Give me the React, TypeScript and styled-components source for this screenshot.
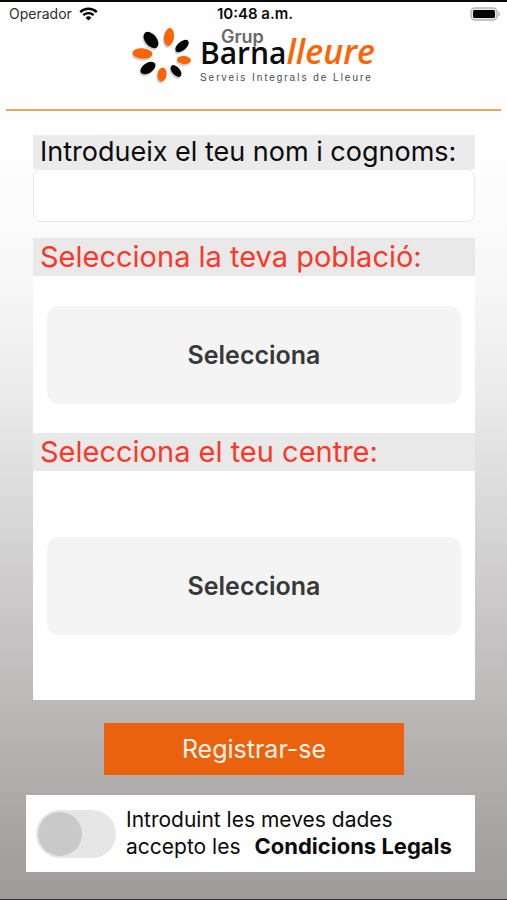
import React from "react";
import styled, { createGlobalStyle } from "styled-components";

const GlobalStyle = createGlobalStyle`
  *, *::before, *::after { box-sizing: border-box; }
  html { background: #9f9b9b; }
  body { margin: 0; font-family: Inter, "Liberation Sans", sans-serif; color: #0b0b0c; }
  button, input, select { font: inherit; color: inherit; }
`;

const Screen = styled.div`
  display: flex;
  flex-direction: column;
  min-height: 100vh;
  border-top: 2px solid #0c0a0b;
  border-bottom: 1px solid #2e2b2d;
  background: linear-gradient(
    180deg,
    #ffffff 0%,
    #fefefe 17%,
    #f8f8f8 30%,
    #ececec 43%,
    #dcdbdb 55%,
    #c9c7c7 68%,
    #b9b6b6 80%,
    #a9a5a5 92%,
    #9f9b9b 100%
  );
`;

const StatusBar = styled.div`
  display: grid;
  grid-template-columns: 1fr auto 1fr;
  align-items: center;
  height: 24px;
  padding: 0 6px 0 9px;
  font-size: 14px;
  line-height: 20px;
`;

const Carrier = styled.span`
  display: flex;
  align-items: center;
  gap: 7px;
  color: #2c2c2e;
`;

const Clock = styled.time`
  font-size: 15px;
  font-weight: 600;
`;

const BatterySlot = styled.span`
  display: flex;
  justify-content: flex-end;
`;

const Header = styled.header`
  display: flex;
  justify-content: center;
  margin: 0 6px;
  padding-bottom: 21px;
  border-bottom: 2px solid #eda266;
`;

const Brand = styled.div`
  display: flex;
  gap: 8px;
  height: 62px;
`;

const Wordmark = styled.div`
  display: flex;
  flex-direction: column;
`;

const BrandGroup = styled.span`
  padding-left: 21px;
  font-size: 18px;
  line-height: 22px;
  font-weight: 600;
  color: #69696b;
`;

const BrandName = styled.span`
  margin-top: -9px;
  font-family: "Open Sans", "Noto Sans", sans-serif;
  font-size: 30px;
  line-height: 24px;
  font-weight: 600;
  white-space: nowrap;
`;

const BrandAccent = styled.em`
  color: #fb6504;
  font-size: 34px;
`;

const Tagline = styled.span`
  margin-top: 7px;
  font-family: "Liberation Sans", Arial, sans-serif;
  font-size: 10px;
  line-height: 12px;
  letter-spacing: 2px;
  white-space: nowrap;
  color: #4a4a4c;
`;

const Form = styled.form`
  display: flex;
  flex: 1;
  flex-direction: column;
  padding: 24px 32px 27px 33px;
`;

const FieldLabel = styled.label<{ $required?: boolean }>`
  display: block;
  padding: 0 7px;
  background: ${(p) => (p.$required ? "#e9e9e9" : "#ebebeb")};
  color: ${(p) => (p.$required ? "#f9382a" : "#0b0b0c")};
  font-size: ${(p) => (p.$required ? 29 : 27)}px;
  line-height: ${(p) => (p.$required ? 38 : 34)}px;
`;

const NameInput = styled.input`
  width: 100%;
  height: 53px;
  margin-bottom: 16px;
  padding: 0 10px;
  border: 1px solid #e9e9e9;
  border-radius: 8px;
  background: #fff;
  font-size: 27px;
`;

const Panel = styled.div<{ $roomy?: boolean }>`
  padding: ${(p) => (p.$roomy ? "66px 14px 65px" : "30px 14px 29px")};
  background: #fff;
`;

const Picker = styled.select`
  display: block;
  width: 100%;
  height: 98px;
  border: 0;
  border-radius: 12px;
  appearance: none;
  background: #f4f4f4;
  color: #363839;
  font-size: 25px;
  font-weight: 600;
  text-align: center;
  text-align-last: center;
`;

const SubmitButton = styled.button`
  align-self: center;
  width: 68%;
  height: 52px;
  margin: 23px 0 20px;
  border: 0;
  background: #ea620e;
  color: #fff3e8;
  font-size: 25px;
`;

const Consent = styled.div`
  display: flex;
  align-items: center;
  gap: 10px;
  margin-left: -7px;
  padding: 12px 10px;
  background: #fff;
`;

const Switch = styled.input`
  display: flex;
  flex: none;
  align-items: center;
  width: 80px;
  height: 48px;
  margin: 0;
  padding: 2px;
  border-radius: 24px;
  appearance: none;
  background: #e6e6e7;

  &::before {
    content: "";
    width: 44px;
    height: 44px;
    border-radius: 50%;
    background: #c9c9c9;
  }

  &:checked {
    justify-content: flex-end;
    background: #f3b68d;
  }
`;

const ConsentText = styled.div`
  display: flex;
  flex-direction: column;
  font-size: 21px;
  line-height: 26px;
`;

const ConsentLine = styled.div`
  display: flex;
  align-items: baseline;
  gap: 14px;
  white-space: nowrap;
`;

const LegalLink = styled.a`
  color: inherit;
  font-size: 22px;
  font-weight: 700;
  text-decoration: none;
`;

const petals = [
  { x: 37, y: 11, rx: 5, ry: 9, turn: 8, fill: "#fb6504" },
  { x: 50, y: 20, rx: 4.4, ry: 8, turn: 50, fill: "#050505" },
  { x: 52, y: 34, rx: 4, ry: 7, turn: 96, fill: "#fb6504" },
  { x: 44, y: 45, rx: 4, ry: 7, turn: 140, fill: "#050505" },
  { x: 30, y: 48.5, rx: 4.6, ry: 7, turn: 8, fill: "#fb6504" },
  { x: 16, y: 42, rx: 5, ry: 8.4, turn: 57, fill: "#050505" },
  { x: 10.5, y: 27.5, rx: 5.2, ry: 10, turn: 94, fill: "#fb6504" },
  { x: 19, y: 14, rx: 5.8, ry: 9.4, turn: 140, fill: "#050505" },
];

const FlowerMark = () => (
  <svg width="60" height="60" viewBox="0 0 60 60" aria-hidden="true">
    {petals.map((p) => (
      <g key={`${p.x}-${p.y}`}>
        <ellipse
          rx={p.rx}
          ry={p.ry}
          fill="#000"
          opacity="0.18"
          transform={`translate(${p.x - 1} ${p.y + 2}) rotate(${p.turn})`}
        />
        <ellipse
          rx={p.rx}
          ry={p.ry}
          fill={p.fill}
          transform={`translate(${p.x} ${p.y}) rotate(${p.turn})`}
        />
      </g>
    ))}
  </svg>
);

const WifiIcon = () => (
  <svg width="19" height="14" viewBox="0 0 19 14" fill="none" aria-hidden="true">
    <path d="M1.2 5.1a12 12 0 0 1 16.6 0" stroke="#050505" strokeWidth="2.4" />
    <path d="M4.3 8.2a7.6 7.6 0 0 1 10.4 0" stroke="#050505" strokeWidth="2.3" />
    <path d="M9.5 13.6 6.6 10.7a4.1 4.1 0 0 1 5.8 0Z" fill="#050505" />
  </svg>
);

const BatteryIcon = () => (
  <svg width="31" height="15" viewBox="0 0 31 15" aria-hidden="true">
    <rect x="1" y="1" width="26" height="12" rx="4" fill="#e8e8e8" stroke="#b5b5b5" strokeWidth="1.4" />
    <rect x="3" y="3" width="22" height="8" rx="1.6" fill="#050505" />
    <path d="M28.4 4.500c2 .6 2 4.400 0 5Z" fill="#b5b5b5" />
  </svg>
);

export default function App() {
  return (
    <>
      <GlobalStyle />
      <Screen>
        <StatusBar>
          <Carrier>
            Operador <WifiIcon />
          </Carrier>
          <Clock>10:48 a.m.</Clock>
          <BatterySlot>
            <BatteryIcon />
          </BatterySlot>
        </StatusBar>
        <Header>
          <Brand>
            <FlowerMark />
            <Wordmark>
              <BrandGroup>Grup</BrandGroup>
              <BrandName>
                Barna<BrandAccent>lleure</BrandAccent>
              </BrandName>
              <Tagline>Serveis Integrals de Lleure</Tagline>
            </Wordmark>
          </Brand>
        </Header>
        <Form onSubmit={(e) => e.preventDefault()}>
          <FieldLabel htmlFor="name">Introdueix el teu nom i cognoms:</FieldLabel>
          <NameInput id="name" type="text" />
          <FieldLabel htmlFor="town" $required>
            Selecciona la teva població:
          </FieldLabel>
          <Panel>
            <Picker id="town">
              <option>Selecciona</option>
            </Picker>
          </Panel>
          <FieldLabel htmlFor="centre" $required>
            Selecciona el teu centre:
          </FieldLabel>
          <Panel $roomy>
            <Picker id="centre">
              <option>Selecciona</option>
            </Picker>
          </Panel>
          <SubmitButton type="submit">Registrar-se</SubmitButton>
          <Consent>
            <Switch id="consent" type="checkbox" role="switch" aria-labelledby="consent-text" />
            <ConsentText id="consent-text">
              <label htmlFor="consent">Introduint les meves dades</label>
              <ConsentLine>
                <label htmlFor="consent">accepto les</label>
                <LegalLink href="#condicions">Condicions Legals</LegalLink>
              </ConsentLine>
            </ConsentText>
          </Consent>
        </Form>
      </Screen>
    </>
  );
}
